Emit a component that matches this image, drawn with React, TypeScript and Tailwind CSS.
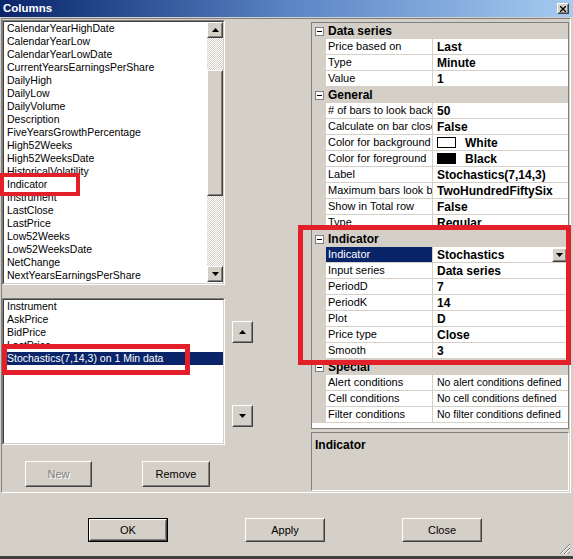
import React from 'react';

type Row = {
  cat?: string;
  name?: string;
  value?: string;
  bold?: boolean;
  swatch?: string;
  selected?: boolean;
  dropdown?: boolean;
};

const topItems = [
  'CalendarYearHighDate',
  'CalendarYearLow',
  'CalendarYearLowDate',
  'CurrentYearsEarningsPerShare',
  'DailyHigh',
  'DailyLow',
  'DailyVolume',
  'Description',
  'FiveYearsGrowthPercentage',
  'High52Weeks',
  'High52WeeksDate',
  'HistoricalVolatility',
  'Indicator',
  'Instrument',
  'LastClose',
  'LastPrice',
  'Low52Weeks',
  'Low52WeeksDate',
  'NetChange',
  'NextYearsEarningsPerShare',
];

const chosenItems = ['Instrument', 'AskPrice', 'BidPrice', 'LastPrice', 'Stochastics(7,14,3) on 1 Min data'];

const rows: Row[] = [
  { cat: 'Data series' },
  { name: 'Price based on', value: 'Last', bold: true },
  { name: 'Type', value: 'Minute', bold: true },
  { name: 'Value', value: '1', bold: true },
  { cat: 'General' },
  { name: '# of bars to look back', value: '50', bold: true },
  { name: 'Calculate on bar close', value: 'False', bold: true },
  { name: 'Color for background', value: 'White', bold: true, swatch: 'bg-white' },
  { name: 'Color for foreground', value: 'Black', bold: true, swatch: 'bg-black' },
  { name: 'Label', value: 'Stochastics(7,14,3)', bold: true },
  { name: 'Maximum bars look back', value: 'TwoHundredFiftySix', bold: true },
  { name: 'Show in Total row', value: 'False', bold: true },
  { name: 'Type', value: 'Regular', bold: true },
  { cat: 'Indicator' },
  { name: 'Indicator', value: 'Stochastics', bold: true, selected: true, dropdown: true },
  { name: 'Input series', value: 'Data series', bold: true },
  { name: 'PeriodD', value: '7', bold: true },
  { name: 'PeriodK', value: '14', bold: true },
  { name: 'Plot', value: 'D', bold: true },
  { name: 'Price type', value: 'Close', bold: true },
  { name: 'Smooth', value: '3', bold: true },
  { cat: 'Special' },
  { name: 'Alert conditions', value: 'No alert conditions defined' },
  { name: 'Cell conditions', value: 'No cell conditions defined' },
  { name: 'Filter conditions', value: 'No filter conditions defined' },
];

const Raised = ({ className = '', children }: { className?: string; children?: React.ReactNode }) => (
  <div className={`border border-t-white border-l-white border-r-[#404040] border-b-[#404040] bg-[#d4d0c8] ${className}`}>
    <div className="h-full w-full border border-t-[#d4d0c8] border-l-[#d4d0c8] border-r-[#808080] border-b-[#808080] flex items-center justify-center">
      {children}
    </div>
  </div>
);

const Sunken = ({ className = '', children }: { className?: string; children?: React.ReactNode }) => (
  <div className={`border border-t-[#808080] border-l-[#808080] border-r-white border-b-white ${className}`}>
    <div className="h-full w-full border border-t-[#404040] border-l-[#404040] border-r-[#d4d0c8] border-b-[#d4d0c8] bg-white overflow-hidden">
      {children}
    </div>
  </div>
);

const Up = () => (
  <svg width="7" height="4" viewBox="0 0 7 4">
    <path d="M3.5 0 L7 4 L0 4 Z" fill="#000" />
  </svg>
);

const Down = () => (
  <svg width="7" height="4" viewBox="0 0 7 4">
    <path d="M0 0 L7 0 L3.5 4 Z" fill="#000" />
  </svg>
);

const Minus = () => (
  <div className="w-[9px] h-[9px] border border-[#808080] bg-white flex items-center justify-center">
    <div className="w-[5px] h-[1px] bg-black" />
  </div>
);

const GridRow = ({ r }: { r: Row }) => {
  if (r.cat) {
    return (
      <div className="h-[16px] flex items-center bg-[#d4d0c8]">
        <div className="w-[14px] flex justify-center">
          <Minus />
        </div>
        <span className="pl-[2px] text-[12px] font-bold text-black">{r.cat}</span>
      </div>
    );
  }
  return (
    <div className="h-[16px] flex">
      <div className="w-[14px] bg-[#d4d0c8]" />
      <div
        className={`w-[107px] border-r border-b border-[#d4d0c8] pl-[2px] leading-[15px] whitespace-nowrap overflow-hidden ${
          r.selected ? 'bg-[#0a246a] text-white' : 'text-black'
        }`}
      >
        {r.name}
      </div>
      <div className="flex-1 border-b border-[#d4d0c8] pl-[4px] flex items-center whitespace-nowrap overflow-hidden">
        {r.swatch && <div className={`w-[19px] h-[11px] border border-black mr-[9px] ${r.swatch}`} />}
        <span className={r.bold ? 'font-bold text-[12px]' : 'text-[10.5px]'}>{r.value}</span>
        {r.dropdown && (
          <Raised className="ml-auto mr-[1px] w-[15px] h-[14px]">
            <Down />
          </Raised>
        )}
      </div>
    </div>
  );
};

export default function App() {
  return (
    <div className="relative w-[573px] h-[559px] bg-[#d4d0c8] overflow-hidden flex flex-col font-['Liberation_Sans',Arial,sans-serif] text-[11px] text-black select-none">
      {/* title bar */}
      <div className="h-[17px] flex items-center justify-between pl-[3px] pr-[4px] bg-gradient-to-r from-[#0a246a] via-[#5a84c4] to-[#a6caf0]">
        <span className="text-white font-bold text-[11.5px]">Columns</span>
        <Raised className="w-[12px] h-[11px]">
          <svg width="6" height="6" viewBox="0 0 6 6">
            <path d="M0 0 L6 6 M6 0 L0 6" stroke="#000" strokeWidth="1.3" />
          </svg>
        </Raised>
      </div>

      {/* main panel */}
      <div className="mt-[1px] ml-[1px] mr-[2px] h-[475px] border border-t-[#808080] border-l-[#808080] border-r-white border-b-white flex">
        {/* left column */}
        <div className="w-[223px] pt-[1px] flex flex-col text-[10.5px]">
          <Sunken className="h-[265px]">
            <div className="flex h-full">
              <div className="flex-1">
                {topItems.map((t) => (
                  <div key={t} className="h-[13px] leading-[13px] pl-[3px] whitespace-nowrap">
                    {t}
                  </div>
                ))}
              </div>
              <div className="w-[16px] flex flex-col">
                <Raised className="h-[16px]">
                  <Up />
                </Raised>
                <div className="h-[32px] bg-[image:repeating-conic-gradient(#ffffff_0%_25%,#d4d0c8_0%_50%)] bg-[length:2px_2px]" />
                <Raised className="h-[126px]" />
                <div className="h-[70px] bg-[image:repeating-conic-gradient(#ffffff_0%_25%,#d4d0c8_0%_50%)] bg-[length:2px_2px]" />
                <Raised className="h-[16px]">
                  <Down />
                </Raised>
              </div>
            </div>
          </Sunken>

          <Sunken className="mt-[13px] h-[147px]">
            {chosenItems.map((t, i) => (
              <div
                key={t}
                className={`h-[13px] leading-[13px] pl-[3px] whitespace-nowrap ${
                  i === chosenItems.length - 1 ? 'bg-[#0a246a] text-white' : ''
                }`}
              >
                {t}
              </div>
            ))}
          </Sunken>

          <div className="mt-[16px] flex text-[11px]">
            <Raised className="ml-[23px] w-[67px] h-[26px]">
              <span className="text-[#808080] [text-shadow:1px_1px_0_#fff]">New</span>
            </Raised>
            <Raised className="ml-[50px] w-[68px] h-[26px]">
              <span>Remove</span>
            </Raised>
          </div>
        </div>

        {/* move up / down */}
        <div className="ml-[7px] w-[21px] pt-[302px] flex flex-col">
          <Raised className="h-[22px]">
            <Up />
          </Raised>
          <Raised className="mt-[62px] h-[22px]">
            <Down />
          </Raised>
        </div>

        {/* property grid */}
        <div className="ml-[58px] w-[258px] pt-[3px] flex flex-col">
          <div className="h-[407px] border border-[#808080] bg-white overflow-hidden">
            {rows.map((r, i) => (
              <GridRow key={i} r={r} />
            ))}
          </div>
          <div className="mt-[3px] h-[59px] border border-t-[#808080] border-l-[#808080] border-r-white border-b-white px-[3px] pt-[3px]">
            <span className="font-bold text-[12px]">Indicator</span>
          </div>
        </div>
      </div>

      {/* dialog buttons */}
      <div className="flex-1 relative border-b-[3px] border-b-[#404040]">
        <div className="pt-[25px] pl-[88px] flex gap-[77px]">
          <div className="border border-black">
            <Raised className="w-[78px] h-[22px]">
              <span>OK</span>
            </Raised>
          </div>
          <Raised className="w-[80px] h-[24px]">
            <span>Apply</span>
          </Raised>
          <Raised className="w-[80px] h-[24px]">
            <span>Close</span>
          </Raised>
        </div>
        <svg className="absolute right-[2px] bottom-[1px]" width="12" height="12" viewBox="0 0 12 12">
          <path d="M11 1 L1 11 M11 5 L5 11 M11 9 L9 11" stroke="#808080" strokeWidth="1" />
          <path d="M11 2 L2 11 M11 6 L6 11 M11 10 L10 11" stroke="#ffffff" strokeWidth="1" />
        </svg>
      </div>

      {/* red annotation boxes */}
      <div className="absolute left-0 top-[173px] w-[80px] h-[23px] border-4 border-[#e3202a]" />
      <div className="absolute left-[2px] top-[344px] w-[188px] h-[31px] border-[5px] border-[#e3202a]" />
      <div className="absolute left-[298px] top-[225px] w-[273px] h-[140px] border-[5px] border-[#e3202a]" />
    </div>
  );
}
